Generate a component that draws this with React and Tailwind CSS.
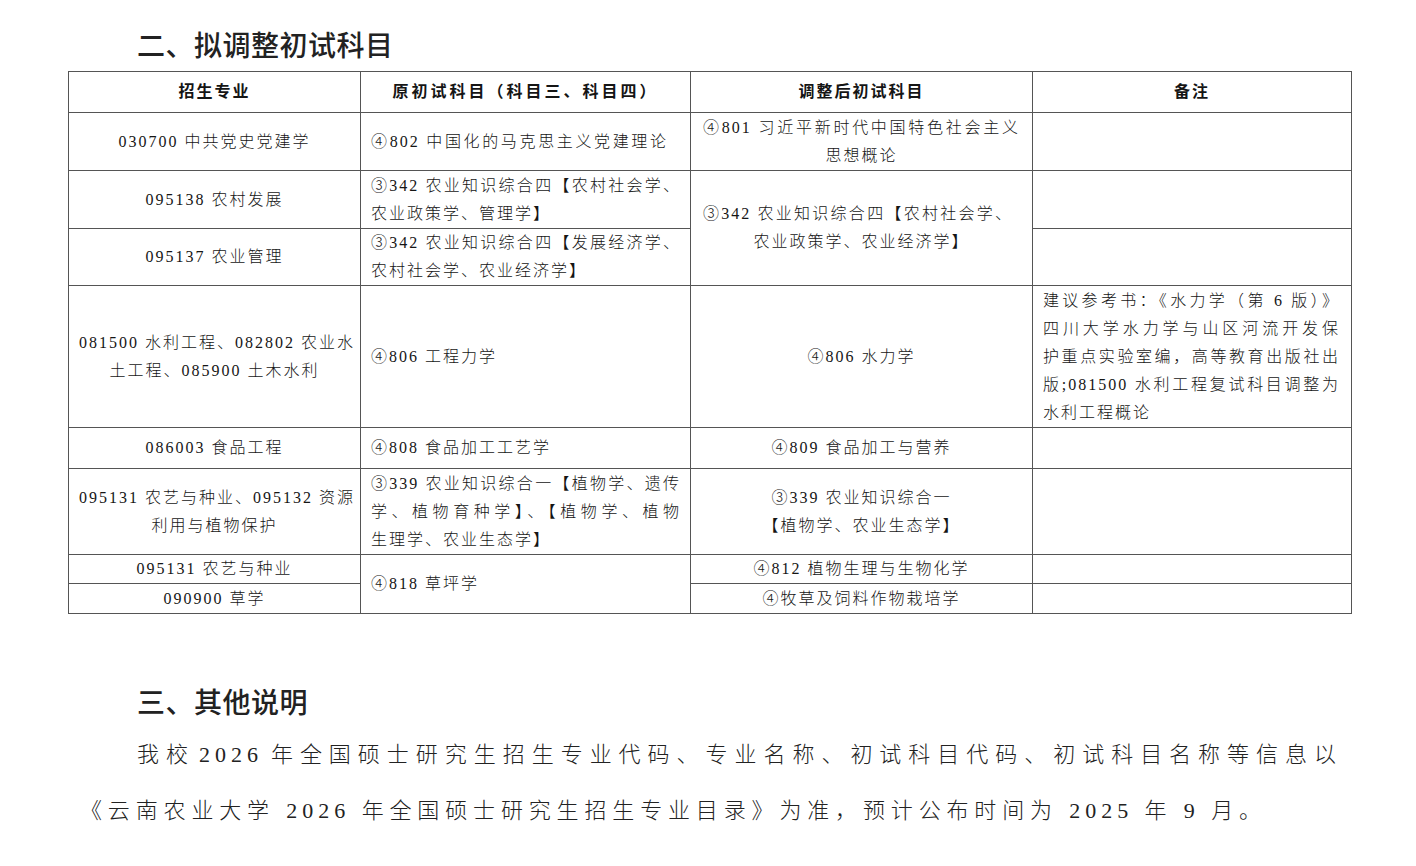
const c = "border border-[#555] px-[10px] py-0 align-middle";
const J = "text-justify [text-align-last:justify]";

export default function App() {
  return (
    <div lang="zh-CN" className="w-[1416px] h-[866px] bg-white overflow-hidden text-[#151515] [font-family:'Liberation_Serif','Noto_Sans_CJK_SC',serif]">
      <h2 className="pl-[137px] pt-[26px] h-[71px] text-[28px] leading-[36px] tracking-[0.5px] font-medium text-[#222] [font-family:'Noto_Sans_CJK_SC',sans-serif]">
        二、拟调整初试科目
      </h2>
      <table className="ml-[68px] w-[1284px] table-fixed border-collapse text-[16px] tracking-[2px] leading-[28px] font-light">
        <colgroup>
          <col className="w-[292px]" />
          <col className="w-[330px]" />
          <col className="w-[342px]" />
          <col className="w-[319px]" />
        </colgroup>
        <tbody>
          <tr className="h-[41px] font-bold">
            <td className={`${c} text-center`}>招生专业</td>
            <td className={`${c} text-center tracking-[3px]`}>原初试科目（科目三、科目四）</td>
            <td className={`${c} text-center`}>调整后初试科目</td>
            <td className={`${c} text-center`}>备注</td>
          </tr>
          <tr className="h-[58px]">
            <td className={`${c} text-center`}>030700 中共党史党建学</td>
            <td className={c}>
              <div className={`w-[297px] ${J}`}>④802 中国化的马克思主义党建理论</div>
            </td>
            <td className={`${c} text-center`}>
              <div className={`w-[317px] mx-auto ${J}`}>④801 习近平新时代中国特色社会主义</div>
              <div>思想概论</div>
            </td>
            <td className={c}></td>
          </tr>
          <tr className="h-[58px]">
            <td className={`${c} text-center`}>095138 农村发展</td>
            <td className={c}>
              <div className={`w-[310px] ${J}`}>③342 农业知识综合四【农村社会学、</div>
              <div>农业政策学、管理学】</div>
            </td>
            <td className={`${c} text-center`} rowSpan={2}>
              <div className={`w-[310px] ml-[2px] ${J}`}>③342 农业知识综合四【农村社会学、</div>
              <div>农业政策学、农业经济学】</div>
            </td>
            <td className={c}></td>
          </tr>
          <tr className="h-[57px]">
            <td className={`${c} text-center`}>095137 农业管理</td>
            <td className={c}>
              <div className={`w-[310px] ${J}`}>③342 农业知识综合四【发展经济学、</div>
              <div>农村社会学、农业经济学】</div>
            </td>
            <td className={c}></td>
          </tr>
          <tr className="h-[142px]">
            <td className={`${c} text-center whitespace-nowrap px-0`}>
              <div>081500 水利工程、082802 农业水</div>
              <div>土工程、085900 土木水利</div>
            </td>
            <td className={c}>④806 工程力学</td>
            <td className={`${c} text-center`}>④806 水力学</td>
            <td className={c}>
              <div className={`w-[297px] ${J}`}>建议参考书：《水力学（第 6 版）》</div>
              <div className={`w-[297px] ${J}`}>四川大学水力学与山区河流开发保</div>
              <div className={`w-[297px] ${J}`}>护重点实验室编，高等教育出版社出</div>
              <div className={`w-[297px] ${J}`}>版;081500 水利工程复试科目调整为</div>
              <div>水利工程概论</div>
            </td>
          </tr>
          <tr className="h-[41px]">
            <td className={`${c} text-center`}>086003 食品工程</td>
            <td className={c}>④808 食品加工工艺学</td>
            <td className={`${c} text-center`}>④809 食品加工与营养</td>
            <td className={c}></td>
          </tr>
          <tr className="h-[86px]">
            <td className={`${c} text-center whitespace-nowrap px-0`}>
              <div>095131 农艺与种业、095132 资源</div>
              <div>利用与植物保护</div>
            </td>
            <td className={c}>
              <div className={`w-[310px] ${J}`}>③339 农业知识综合一【植物学、遗传</div>
              <div className={`w-[310px] ${J}`}>学、植物育种学】、【植物学、植物</div>
              <div>生理学、农业生态学】</div>
            </td>
            <td className={`${c} text-center`}>
              <div>③339 农业知识综合一</div>
              <div>【植物学、农业生态学】</div>
            </td>
            <td className={c}></td>
          </tr>
          <tr className="h-[29px]">
            <td className={`${c} text-center`}>095131 农艺与种业</td>
            <td className={c} rowSpan={2}>④818 草坪学</td>
            <td className={`${c} text-center`}>④812 植物生理与生物化学</td>
            <td className={c}></td>
          </tr>
          <tr className="h-[30px]">
            <td className={`${c} text-center`}>090900 草学</td>
            <td className={`${c} text-center`}>④牧草及饲料作物栽培学</td>
            <td className={c}></td>
          </tr>
        </tbody>
      </table>
      <h2 className="mt-[69px] pl-[137px] text-[28px] leading-[36px] tracking-[0.5px] font-medium text-[#222] [font-family:'Noto_Sans_CJK_SC',sans-serif]">
        三、其他说明
      </h2>
      <div className="mt-[8px] text-[22px] leading-[56px] tracking-[5px] font-light text-[#222]">
        <p className={`ml-[137px] w-[1204px] ${J}`}>
          我校<span className="ml-[4px] mr-[6px]">2026</span>年全国硕士研究生招生专业代码、专业名称、初试科目代码、初试科目名称等信息以
        </p>
        <p className={`ml-[80px] w-[1186px] ${J}`}>
          《云南农业大学 2026 年全国硕士研究生招生专业目录》为准，预计公布时间为 2025 年 9 月。
        </p>
      </div>
    </div>
  );
}
